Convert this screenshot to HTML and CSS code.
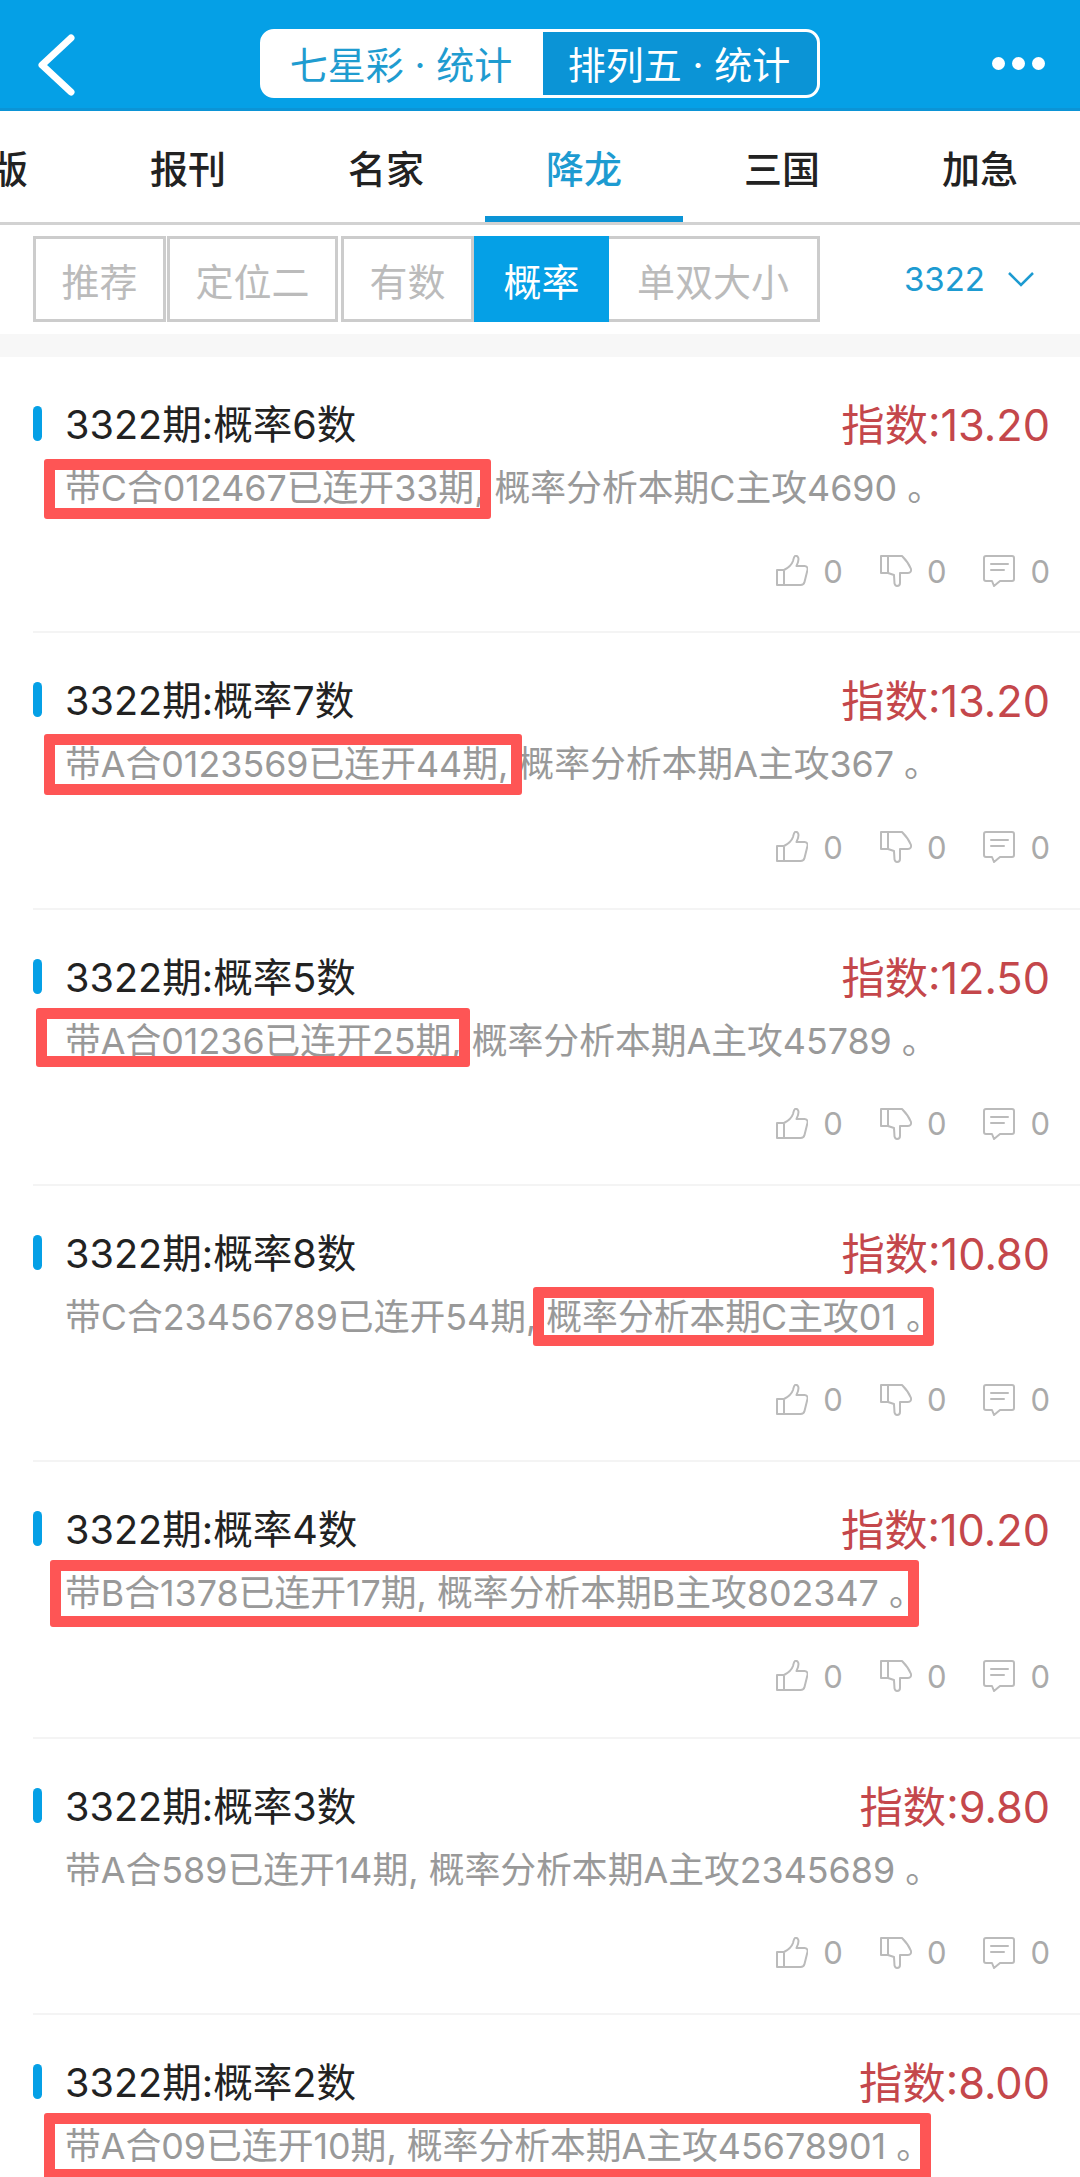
FILE: index.html
```html
<!DOCTYPE html>
<html lang="zh-CN">
<head>
<meta charset="utf-8">
<title>概率</title>
<link rel="stylesheet" href="styles.css">
</head>
<body>
<svg class="sprites" width="0" height="0" aria-hidden="true">
  <symbol id="i-up" viewBox="0 0 32 32">
    <path d="M1 15h7v15H1z M8 15c4-2 8-6 9-9 .6-2 .6-4 2-5 2-.6 3.500 1 3.500 3 0 3-1 5-2 7h8c2.500 0 3.500 2 3 4l-3 12c-.5 2-2 3-4 3H8" fill="none" stroke="currentColor" stroke-width="2" stroke-linejoin="round" stroke-linecap="round"/>
  </symbol>
  <symbol id="i-down" viewBox="0 0 32 32">
    <path d="M1 1h7v17H1z M8 1h14c3 3 7 8 9 13 .5 2-.5 4-3 4h-8v10c0 2-1.500 3-3 3s-2-1-2.500-2.500L14 20l-6-2" fill="none" stroke="currentColor" stroke-width="2" stroke-linejoin="round" stroke-linecap="round"/>
  </symbol>
  <symbol id="i-msg" viewBox="0 0 32 32">
    <path d="M3 1h26c1.200 0 2 .8 2 2v21c0 1.200-.8 2-2 2H17l-6 5-2-5H3c-1.200 0-2-.8-2-2V3c0-1.200.8-2 2-2z M8 9h17 M8 15h13" fill="none" stroke="currentColor" stroke-width="2" stroke-linejoin="round" stroke-linecap="round"/>
  </symbol>
</svg>

<header class="topbar">
  <svg class="back" viewBox="0 0 40 62" aria-label="返回"><path d="M35 4 6 31l29 27" fill="none" stroke="#fff" stroke-width="7" stroke-linecap="round" stroke-linejoin="round"/></svg>
  <div class="segment">
    <span class="seg seg-on">七星彩 · 统计</span>
    <span class="seg seg-off">排列五 · 统计</span>
  </div>
  <div class="more"><i></i><i></i><i></i></div>
</header>

<nav class="tabs">
  <a class="tab tab-cut">版</a>
  <a class="tab">报刊</a>
  <a class="tab">名家</a>
  <a class="tab tab-active">降龙</a>
  <a class="tab">三国</a>
  <a class="tab">加急</a>
</nav>

<div class="filters">
  <a class="chip chip-a">推荐</a>
  <a class="chip chip-b">定位二</a>
  <a class="chip chip-c">有数</a>
  <a class="chip chip-d chip-active">概率</a>
  <a class="chip chip-e">单双大小</a>
  <div class="issue">3322
    <svg class="caret" viewBox="0 0 28 16"><path d="M2 2l12 12L26 2" fill="none" stroke="#1d9bd1" stroke-width="2.500"/></svg>
  </div>
</div>
<div class="band"></div>

<main class="list">
  <article class="item">
    <div class="head"><h2 class="title">3322期:概率6数</h2><span class="score">指数:13.20</span></div>
    <p class="desc">带C合012467已连开33期, 概率分析本期C主攻4690 。</p>
    <div class="acts"><svg class="ico"><use href="#i-up"/></svg><span class="n">0</span><svg class="ico"><use href="#i-down"/></svg><span class="n">0</span><svg class="ico"><use href="#i-msg"/></svg><span class="n">0</span></div>
    <span class="mark mark-1"></span>
  </article>
  <article class="item">
    <div class="head"><h2 class="title">3322期:概率7数</h2><span class="score">指数:13.20</span></div>
    <p class="desc">带A合0123569已连开44期, 概率分析本期A主攻367 。</p>
    <div class="acts"><svg class="ico"><use href="#i-up"/></svg><span class="n">0</span><svg class="ico"><use href="#i-down"/></svg><span class="n">0</span><svg class="ico"><use href="#i-msg"/></svg><span class="n">0</span></div>
    <span class="mark mark-2"></span>
  </article>
  <article class="item">
    <div class="head"><h2 class="title">3322期:概率5数</h2><span class="score">指数:12.50</span></div>
    <p class="desc">带A合01236已连开25期, 概率分析本期A主攻45789 。</p>
    <div class="acts"><svg class="ico"><use href="#i-up"/></svg><span class="n">0</span><svg class="ico"><use href="#i-down"/></svg><span class="n">0</span><svg class="ico"><use href="#i-msg"/></svg><span class="n">0</span></div>
    <span class="mark mark-3"></span>
  </article>
  <article class="item">
    <div class="head"><h2 class="title">3322期:概率8数</h2><span class="score">指数:10.80</span></div>
    <p class="desc">带C合23456789已连开54期, 概率分析本期C主攻01 。</p>
    <div class="acts"><svg class="ico"><use href="#i-up"/></svg><span class="n">0</span><svg class="ico"><use href="#i-down"/></svg><span class="n">0</span><svg class="ico"><use href="#i-msg"/></svg><span class="n">0</span></div>
    <span class="mark mark-4"></span>
  </article>
  <article class="item">
    <div class="head"><h2 class="title">3322期:概率4数</h2><span class="score">指数:10.20</span></div>
    <p class="desc">带B合1378已连开17期, 概率分析本期B主攻802347 。</p>
    <div class="acts"><svg class="ico"><use href="#i-up"/></svg><span class="n">0</span><svg class="ico"><use href="#i-down"/></svg><span class="n">0</span><svg class="ico"><use href="#i-msg"/></svg><span class="n">0</span></div>
    <span class="mark mark-5"></span>
  </article>
  <article class="item">
    <div class="head"><h2 class="title">3322期:概率3数</h2><span class="score">指数:9.80</span></div>
    <p class="desc">带A合589已连开14期, 概率分析本期A主攻2345689 。</p>
    <div class="acts"><svg class="ico"><use href="#i-up"/></svg><span class="n">0</span><svg class="ico"><use href="#i-down"/></svg><span class="n">0</span><svg class="ico"><use href="#i-msg"/></svg><span class="n">0</span></div>
  </article>
  <article class="item">
    <div class="head"><h2 class="title">3322期:概率2数</h2><span class="score">指数:8.00</span></div>
    <p class="desc">带A合09已连开10期, 概率分析本期A主攻45678901 。</p>
    <span class="mark mark-7"></span>
  </article>
</main>
</body>
</html>
```
FILE: styles.css
```css
* { box-sizing: border-box; }
html, body { margin: 0; padding: 0; height: 2177px; overflow: hidden; background: #fff; }
body { font-family: Inter, "Noto Sans CJK SC", sans-serif; color: #222; }
.sprites { position: absolute; }

.topbar { height: 111px; background: #05a0e6; border-bottom: 3px solid #0b94d6; display: flex; align-items: center; padding: 18px 36px 0; }
.back { width: 40px; height: 62px; flex: none; margin-top: 3px; }
.segment { width: 560px; height: 69px; margin-left: 184px; display: flex; border: 3px solid #fff; border-radius: 14px; overflow: hidden; background: #fff; flex: none; }
.seg { display: flex; align-items: center; justify-content: center; font-size: 38px; white-space: nowrap; padding-bottom: 2px; }
.seg-on { width: 280px; color: #1f9cd0; padding-right: 4px; }
.seg-off { flex: 1; background: #0b94d6; color: #fff; padding-right: 2px; }
.more { display: flex; gap: 7px; margin-left: auto; margin-right: -1px; }
.more i { width: 13px; height: 13px; border-radius: 50%; background: #fff; display: block; }

.tabs { height: 114px; display: flex; border-bottom: 3px solid #d2d2d2; overflow: hidden; }
.tab { flex: none; width: 198px; height: 111px; display: flex; align-items: center; justify-content: center; font-size: 38px; color: #222; font-weight: 500; position: relative; }
.tab-cut { width: 89px; justify-content: flex-end; padding-right: 61px; }
.tab-active { color: #1d9bd1; }
.tab-active::after { content: ""; position: absolute; left: 0; right: 0; bottom: 0; height: 6px; background: #0b94d6; }

.filters { height: 109px; padding: 11px 30px 12px 33px; display: flex; }
.chip { height: 86px; border: 3px solid #ccc; display: flex; align-items: center; justify-content: center; font-size: 38px; color: #bbb; flex: none; }
.chip-a { width: 133px; }
.chip-b { width: 171px; margin-left: 1px; }
.chip-c { width: 133px; margin-left: 3px; }
.chip-d { width: 135px; }
.chip-e { width: 211px; border-left: 0; }
.chip-active { background: #05a0e6; border-color: #05a0e6; color: #fff; }
.issue { margin-left: auto; display: flex; align-items: center; gap: 22px; font-size: 33px; color: #1d9bd1; padding-right: 15px; }
.caret { width: 28px; height: 16px; flex: none; }
.band { height: 23px; background: #f7f7f7; }

.item { height: 276.33px; margin-left: 33px; padding: 43px 30px 0 0; border-bottom: 2px solid #f4f4f4; position: relative; }
.head { display: flex; align-items: center; justify-content: space-between; height: 50px; }
.title { margin: 0; font-size: 39.600px; font-weight: 400; color: #222; padding-left: 32px; position: relative; line-height: 50px; }
.title::before { content: ""; position: absolute; left: 0; top: 6px; width: 9px; height: 35px; border-radius: 5px; background: #05a0e6; }
.score { font-size: 43.300px; color: #c4474b; line-height: 50px; }
.desc { margin: 13px 0 0; padding-left: 32px; font-size: 35.800px; line-height: 50px; color: #999; white-space: nowrap; }
.acts { margin-top: 39px; height: 38px; display: flex; align-items: center; justify-content: flex-end; color: #bbb; }
.ico { width: 32px; height: 32px; flex: none; margin-left: 37px; }
.n { font-size: 31px; color: #aaa; margin-left: 15px; }

.mark { position: absolute; border: 11px solid #fe5555; border-radius: 3px; }
.mark-1 { left: 11px; top: 102px; width: 447px; height: 60px; }
.mark-2 { left: 11px; top: 101px; width: 478px; height: 61px; }
.mark-3 { left: 3px; top: 98px; width: 434px; height: 59px; }
.mark-4 { left: 500px; top: 101px; width: 401px; height: 59px; }
.mark-5 { left: 17px; top: 98px; width: 869px; height: 67px; }
.mark-7 { left: 11px; top: 98px; width: 887px; height: 67px; }
```
